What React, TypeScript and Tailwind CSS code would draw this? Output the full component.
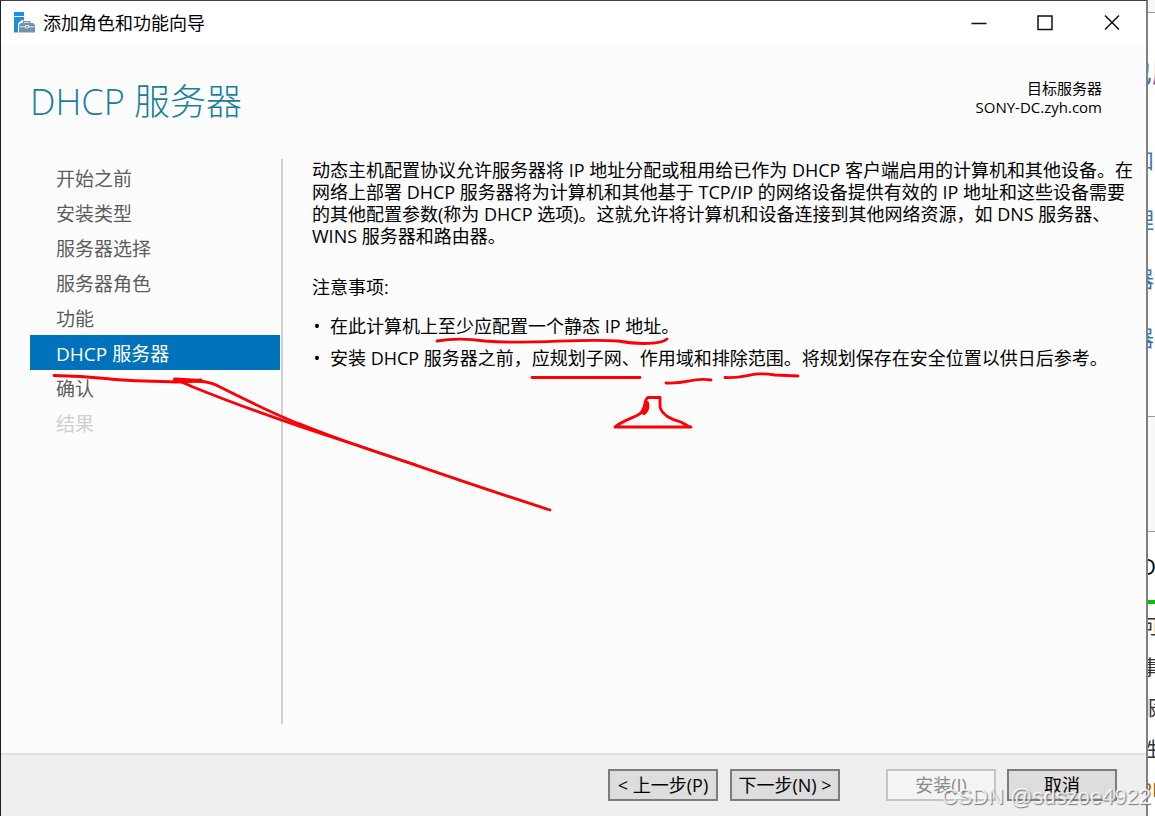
import type { ReactNode } from "react";

const steps = ["开始之前", "安装类型", "服务器选择", "服务器角色", "功能", "DHCP 服务器", "确认", "结果"];
const currentStep = 5;

const pageLinks = ["和", "理", "器", "器"];
const pageLines = ["可", "事", "服", "性"];

function WizardIcon() {
  return (
    <svg viewBox="0 0 21 21" className="h-[21px] w-[21px]" aria-hidden="true">
      <path d="M0 0h10v4H0zM0 5h10v3.300H7.500L4 11.500V20.500H0z" fill="#1e8ee0" />
      <path d="M9.500 11.500V9.600h6.500V11.500" fill="none" stroke="#7393ab" strokeWidth="1.300" />
      <path d="M5 13l2-2h12L21 13V20.500H5z" fill="#7393ab" />
      <path d="M5.500 14.800h5.500M15 14.800h5.500M11.500 13.500h3v2.300h-3z" stroke="#fff" strokeWidth="0.800" fill="none" />
    </svg>
  );
}

function TitleBar() {
  return (
    <header className="flex h-[43px] items-center bg-white pl-[13px]">
      <WizardIcon />
      <h1 className="ml-2 text-[18px] leading-6">添加角色和功能向导</h1>
      <div className="ml-auto flex">
        <button type="button" aria-label="最小化" className="flex h-10 w-[66px] items-center justify-center">
          <svg viewBox="0 0 16 16" className="h-4 w-4" stroke="#111" strokeWidth="1.500">
            <path d="M0.500 8.500h15" />
          </svg>
        </button>
        <button type="button" aria-label="最大化" className="flex h-10 w-[66px] items-center justify-center">
          <svg viewBox="0 0 16 16" className="h-4 w-4" fill="none" stroke="#111" strokeWidth="1.500">
            <path d="M1 1h14v13.500H1z" />
          </svg>
        </button>
        <button type="button" aria-label="关闭" className="flex h-10 w-[68px] items-center justify-center">
          <svg viewBox="0 0 16 16" className="h-4 w-4" stroke="#111" strokeWidth="1.500">
            <path d="M1 0.500l14 14M15 0.500L1 14.500" />
          </svg>
        </button>
      </div>
    </header>
  );
}

function StepList() {
  return (
    <nav className="mr-px w-[250px] shrink-0 pt-px">
      <ul>
        {steps.map((step, i) => {
          const state =
            i === currentStep ? "bg-[#0072bc] text-white" : i === steps.length - 1 ? "text-[#cfcfcf]" : "text-[#5c5c5c]";
          return (
            <li key={step}>
              <a href="#" className={`block h-[35px] pl-[26px] text-[19px] leading-[38px] ${state}`}>
                {step}
              </a>
            </li>
          );
        })}
      </ul>
    </nav>
  );
}

function FooterButton({ children, disabled = false }: { children: ReactNode; disabled?: boolean }) {
  return (
    <button
      type="button"
      disabled={disabled}
      className="flex h-8 w-[110px] items-center justify-center whitespace-nowrap border-2 border-[#7c7c7c] bg-[#ddd] text-[18px] leading-6 disabled:border-[#bfc5c9] disabled:bg-[#f4f4f4] disabled:text-[#8a8a8a]"
    >
      {children}
    </button>
  );
}

function Annotations() {
  return (
    <svg
      width="1155"
      height="816"
      className="pointer-events-none absolute left-0 top-0"
      fill="none"
      stroke="#fc0006"
      strokeWidth="2.800"
      strokeLinecap="round"
      strokeLinejoin="round"
      aria-hidden="true"
    >
      <path d="M54 375.500C75 376 90 377 105 378.500S120 380.500 145 381L177 382Q190 382 201 380" />
      <path d="M175 379.500L200 381" strokeWidth="4" />
      <path d="M177 380L193 387C240 406 300 427 350 443S450 478 550 510" />
      <path d="M177 380Q208 380 218 386C250 402 280 417 300 424Q350 444 416 465" />
      <path d="M437 341C455 338 470 339 485 341C535 345 575 338 618 341C640 345 662 344 667 339" />
      <path d="M532 377.500H640" />
      <path d="M666 383C690 384 692 377 711 380" />
      <path d="M725 377.500C748 379 750 371 775 375L798 376" />
      <path d="M615 427C622 421 630 419 638 415C647 411 643 400 648 397.500H660V407C662 415 672 420 681 422L688 426L691 427H615" />
      <path d="M647 403C648 408 647 410 644 413" strokeWidth="4" />
    </svg>
  );
}

function PageBehind() {
  return (
    <aside className="w-[7px] shrink-0 overflow-hidden bg-white" aria-hidden="true">
      <div className="h-[13px] border-b border-[#999] bg-[#f7f7f7]" />
      <div className="flex h-[118px] w-12 items-center text-[28px] text-[#3076bd]">
        <span className="-ml-6">也</span>
        <span className="text-[#8a5aa8]">服</span>
      </div>
      {pageLinks.map((text, i) => (
        <div key={i} className="flex h-[59px] w-9 items-center text-[22px] text-[#3076bd]">
          <span className="-ml-4">{text}</span>
        </div>
      ))}
      <div className="mt-[49px] h-[116px] border-y border-[#999] bg-[#f7f7f7]" />
      <div className="flex h-[68px] w-9 items-center text-[22px]">
        <span className="-ml-2">D</span>
      </div>
      <div className="h-1 bg-[#00c400]" />
      <div className="h-[2px]" />
      {pageLines.map((text) => (
        <div key={text} className="flex h-[41px] w-9 items-center text-[20px] text-[#333]">
          <span className="-ml-2">{text}</span>
        </div>
      ))}
      <div className="flex h-10 w-9 items-center text-[20px] text-[#a45f20]">
        <span className="-ml-2">PI</span>
      </div>
    </aside>
  );
}

export default function App() {
  return (
    <div className="relative flex h-screen overflow-hidden font-['Open_Sans','Noto_Sans_CJK_SC',sans-serif] text-black">
      <div className="flex min-w-0 flex-1 flex-col border-l border-r-2 border-t border-l-[#172033] border-r-[#808080] border-t-[#444] bg-[#fcfcfc]">
        <TitleBar />

        <div className="flex h-[115px] items-start justify-between pl-[29px] pr-[44px] pt-[35px]">
          <h2 className="text-[36px] font-light leading-[46px] text-[#197f9c]">DHCP 服务器</h2>
          <p className="text-right text-[15px] leading-[19px]">
            目标服务器
            <br />
            SONY-DC.zyh.com
          </p>
        </div>

        <main className="mb-[29px] flex min-h-0 flex-1 pl-[29px]">
          <StepList />
          <section className="border-l-2 border-[#cecece] pl-[29px] pr-3 text-[18px] leading-[22px]">
            <p className="whitespace-nowrap">
              动态主机配置协议允许服务器将 IP 地址分配或租用给已作为 DHCP 客户端启用的计算机和其他设备。在
              <br />
              网络上部署 DHCP 服务器将为计算机和其他基于 TCP/IP 的网络设备提供有效的 IP 地址和这些设备需要
              <br />
              的其他配置参数(称为 DHCP 选项)。这就允许将计算机和设备连接到其他网络资源，如 DNS 服务器、
              <br />
              WINS 服务器和路由器。
            </p>
            <p className="mt-[29px]">注意事项:</p>
            <ul className="mt-[17px] space-y-[10px] whitespace-nowrap">
              <li className="flex gap-2">
                <span className="w-[10px] text-center">•</span>在此计算机上至少应配置一个静态 IP 地址。
              </li>
              <li className="flex gap-2">
                <span className="w-[10px] text-center">•</span>
                安装 DHCP 服务器之前，应规划子网、作用域和排除范围。将规划保存在安全位置以供日后参考。
              </li>
            </ul>
          </section>
        </main>

        <footer className="flex h-[63px] items-start justify-end border-t-2 border-[#dfdfdf] bg-[#efefef] pr-[29px] pt-[14px]">
          <FooterButton>&lt; 上一步(P)</FooterButton>
          <div className="ml-3 mr-[46px] flex">
            <FooterButton>下一步(N) &gt;</FooterButton>
          </div>
          <div className="flex gap-[11px]">
            <FooterButton disabled>安装(I)</FooterButton>
            <FooterButton>取消</FooterButton>
          </div>
        </footer>
      </div>

      <PageBehind />
      <Annotations />
      <p className="pointer-events-none absolute bottom-1 right-1 font-['Liberation_Sans',sans-serif] text-[22px] leading-[30px] text-white/80 [text-shadow:1px_1px_1px_#777]">
        CSDN @sdszoe4922
      </p>
    </div>
  );
}
